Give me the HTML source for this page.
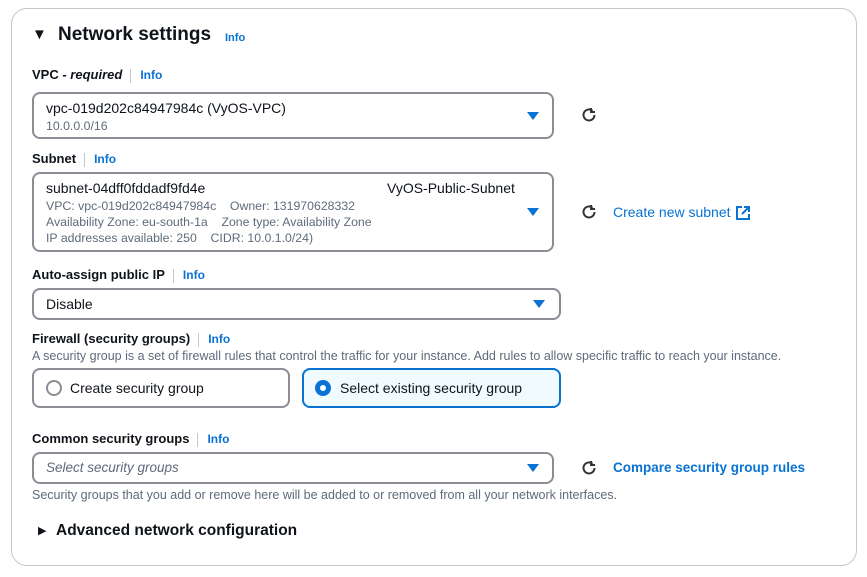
<!DOCTYPE html>
<html><head><style>
*{margin:0;padding:0;box-sizing:border-box}
body{width:867px;height:577px;background:#fff;font-family:"Liberation Sans",sans-serif;color:#0f141a;position:relative;overflow:hidden}
.a{position:absolute;white-space:nowrap}
.card{position:absolute;left:11px;top:8px;width:846px;height:558px;border:1px solid #c6c6cd;border-radius:16px}
.lbl{font-size:13px;font-weight:bold}
.info{font-size:12px;font-weight:bold;color:#0972d3}
.sep{display:inline-block;width:1px;height:14px;background:#c6c6cd;vertical-align:middle;margin:0 9px 0 8px}
.box{position:absolute;border:2px solid #8c8c94;border-radius:8px;background:#fff}
.tri{position:absolute;width:0;height:0;border-left:6px solid transparent;border-right:6px solid transparent;border-top:8px solid #0972d3}
.s{font-size:12.3px;color:#5f6b7a}
.link{color:#0972d3;font-size:14px}
</style></head><body>
<div class="card"></div>
<div class="a" style="left:32px;top:26px;font-size:15px">&#9660;</div>
<div class="a" style="left:58px;top:24px;font-size:19px;font-weight:bold">Network settings</div>
<div class="a info" style="left:225px;top:32px;font-size:11px">Info</div>

<div class="a lbl" style="left:32px;top:67px">VPC - <i>required</i><span class="sep"></span><span class="info">Info</span></div>
<div class="box" style="left:32px;top:92px;width:522px;height:47px"></div>
<div class="a" style="left:46px;top:100px;font-size:14px">vpc-019d202c84947984c (VyOS-VPC)</div>
<div class="a s" style="left:46px;top:119px">10.0.0.0/16</div>
<div class="tri" style="left:527px;top:112px"></div>
<svg class="a" style="left:580px;top:106px" width="18" height="18" viewBox="0 0 18 18"><path d="M14.5 9a5.5 5.5 0 1 1-2-4.3" fill="none" stroke="#333" stroke-width="2"/><path d="M11 2v4h4" fill="none" stroke="#333" stroke-width="2"/></svg>

<div class="a lbl" style="left:32px;top:151px">Subnet<span class="sep"></span><span class="info">Info</span></div>
<div class="box" style="left:32px;top:172px;width:522px;height:80px"></div>
<div class="a" style="left:46px;top:180px;font-size:14px">subnet-04dff0fddadf9fd4e</div>
<div class="a" style="left:387px;top:180px;font-size:14px">VyOS-Public-Subnet</div>
<div class="a s" style="left:46px;top:199px">VPC: vpc-019d202c84947984c &nbsp;&nbsp; Owner: 131970628332</div>
<div class="a s" style="left:46px;top:215px">Availability Zone: eu-south-1a &nbsp;&nbsp; Zone type: Availability Zone</div>
<div class="a s" style="left:46px;top:231px">IP addresses available: 250 &nbsp;&nbsp; CIDR: 10.0.1.0/24)</div>
<div class="tri" style="left:527px;top:208px"></div>
<svg class="a" style="left:580px;top:203px" width="18" height="18" viewBox="0 0 18 18"><path d="M14.5 9a5.5 5.5 0 1 1-2-4.3" fill="none" stroke="#333" stroke-width="2"/><path d="M11 2v4h4" fill="none" stroke="#333" stroke-width="2"/></svg>
<div class="a link" style="left:613px;top:204px">Create new subnet</div>
<svg class="a" style="left:735px;top:205px" width="16" height="16" viewBox="0 0 16 16"><path d="M7 2H2v12h12V9M9 2h5v5M14 2L7 9" fill="none" stroke="#0972d3" stroke-width="2"/></svg>

<div class="a lbl" style="left:32px;top:267px">Auto-assign public IP<span class="sep"></span><span class="info">Info</span></div>
<div class="box" style="left:32px;top:288px;width:529px;height:32px"></div>
<div class="a" style="left:46px;top:296px;font-size:14px">Disable</div>
<div class="tri" style="left:533px;top:300px"></div>

<div class="a lbl" style="left:32px;top:331px">Firewall (security groups)<span class="sep"></span><span class="info">Info</span></div>
<div class="a s" style="left:32px;top:349px;font-size:12.5px">A security group is a set of firewall rules that control the traffic for your instance. Add rules to allow specific traffic to reach your instance.</div>
<div class="box" style="left:32px;top:368px;width:258px;height:40px"></div>
<div class="a" style="left:46px;top:380px;width:16px;height:16px;border:2px solid #8c8c94;border-radius:50%"></div>
<div class="a" style="left:70px;top:380px;font-size:14px">Create security group</div>
<div class="box" style="left:302px;top:368px;width:259px;height:40px;border-color:#0972d3;background:#f0fbff"></div>
<div class="a" style="left:315px;top:380px;width:16px;height:16px;border:5px solid #0972d3;border-radius:50%;background:#fff"></div>
<div class="a" style="left:340px;top:380px;font-size:14px">Select existing security group</div>

<div class="a lbl" style="left:32px;top:431px">Common security groups<span class="sep"></span><span class="info">Info</span></div>
<div class="box" style="left:32px;top:452px;width:522px;height:32px"></div>
<div class="a" style="left:46px;top:460px;font-size:13.5px;font-style:italic;color:#5f6b7a">Select security groups</div>
<div class="tri" style="left:527px;top:464px"></div>
<svg class="a" style="left:580px;top:459px" width="18" height="18" viewBox="0 0 18 18"><path d="M14.5 9a5.5 5.5 0 1 1-2-4.3" fill="none" stroke="#333" stroke-width="2"/><path d="M11 2v4h4" fill="none" stroke="#333" stroke-width="2"/></svg>
<div class="a link" style="left:613px;top:460px;font-weight:bold;font-size:13.5px">Compare security group rules</div>
<div class="a s" style="left:32px;top:488px;font-size:12.5px">Security groups that you add or remove here will be added to or removed from all your network interfaces.</div>

<div class="a" style="left:38px;top:524px;font-size:11px">&#9654;</div>
<div class="a" style="left:56px;top:522px;font-size:15.5px;font-weight:bold">Advanced network configuration</div>
</body></html>
